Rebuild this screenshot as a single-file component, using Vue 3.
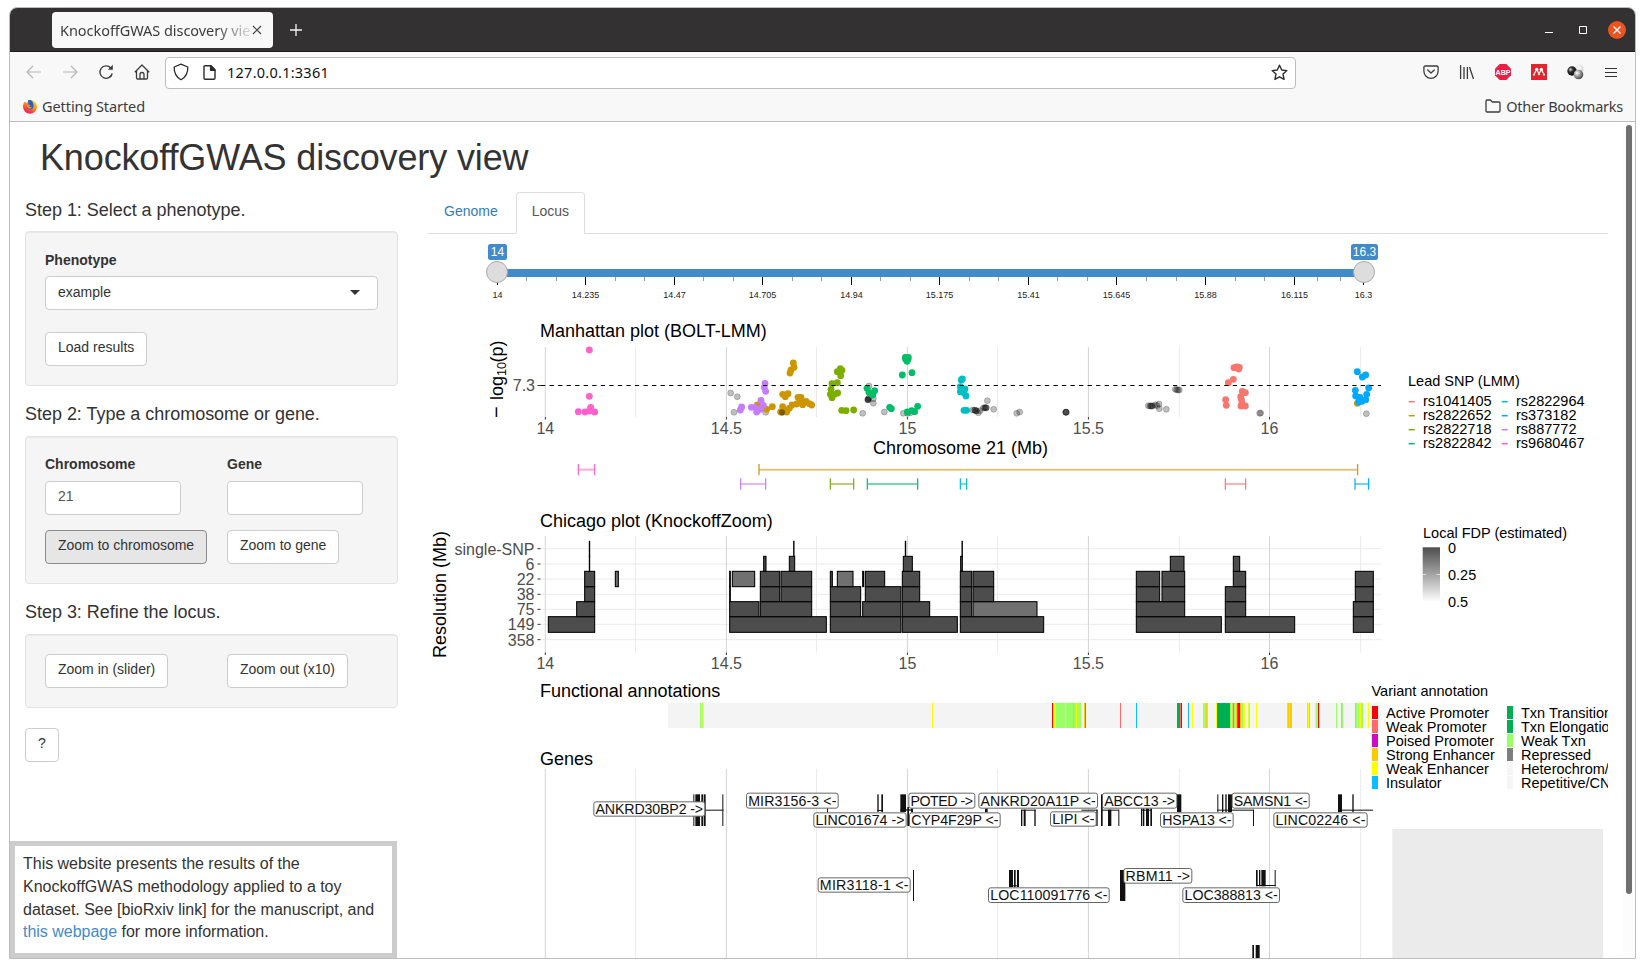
<script setup>
const sliderMajor = [
  [497.5, '14'], [585.5, '14.235'], [674.5, '14.47'], [762.5, '14.705'], [851.5, '14.94'], [939.5, '15.175'],
  [1028.5, '15.41'], [1116.5, '15.645'], [1205.5, '15.88'], [1294.5, '16.115'], [1363.5, '16.3'],
]
const sliderMinor = [
  526.5, 556.5, 615.5, 644.5, 703.5, 733.5, 792.5, 821.5, 880.5, 910.5, 969.5, 998.5, 1057.5, 1087.5,
  1146.5, 1176.5, 1235.5, 1264.5, 1317.5, 1340.5,
]

const majors = [[545.3, '14'], [726.4, '14.5'], [907.4, '15'], [1088.4, '15.5'], [1269.5, '16']]
const minors = [635.5, 816.5, 997.6, 1179.4, 1360.6]

// Plot data is kept in thirds of a pixel; these place it on the canvas.
const px = (v) => 420 + v / 3
const gx = (v) => 520 + v / 3
const my = (v) => 180 + v / 3
const cy = (v) => 425 + v / 3
const gy = (v) => 675 + v / 3

const C = {
  red: '#F8766D', gold: '#CD9600', olive: '#7CAE00', green: '#00BE67',
  teal: '#00BFC4', blue: '#00A9FF', purple: '#C77CFF', pink: '#FF61CC',
}
const series = [
  { c: C.pink, p: [[508, 510], [508, 649], [512, 682], [475, 695], [495, 696], [508, 693], [524, 696]] },
  { c: C.gold, p: [[1120, 549], [1122, 562], [1113, 570], [1110, 579], [1088, 643], [1104, 641], [1096, 650], [1134, 652], [1143, 652], [1140, 663], [1158, 664], [1148, 674], [1168, 671], [1175, 675], [1130, 672], [1116, 675], [1108, 685], [1088, 680], [1100, 696], [1082, 696], [1092, 688], [1057, 680], [1040, 688], [1024, 671], [1012, 675], [2812, 670]] },
  { c: C.purple, p: [[1035, 610], [1033, 622], [1037, 634], [1023, 661], [1030, 676], [965, 681], [961, 690], [994, 682], [1005, 682], [1010, 696], [1022, 688]] },
  { c: C.olive, p: [[1261, 566], [1252, 575], [1266, 571], [1262, 587], [1236, 611], [1252, 608], [1233, 628], [1231, 643], [1236, 653], [1243, 643], [1253, 639], [1265, 691], [1278, 692], [1301, 690]] },
  { c: C.green, p: [[1456, 532], [1465, 532], [1457, 538], [1464, 538], [1461, 544], [1447, 585], [1476, 578], [1341, 625], [1347, 637], [1364, 632], [1358, 645], [1409, 682], [1414, 686], [1462, 696], [1475, 692], [1484, 695], [1493, 679]] },
  { c: C.teal, p: [[1627, 597], [1624, 600], [1621, 620], [1621, 635], [1635, 627], [1638, 648], [1632, 639], [1632, 691], [1640, 691]] },
  { c: C.red, p: [[2442, 563], [2450, 561], [2458, 562], [2456, 567], [2440, 598], [2425, 608], [2417, 659], [2419, 676], [2467, 634], [2476, 638], [2462, 650], [2464, 658], [2466, 669], [2463, 678], [2476, 678]] },
  { c: C.blue, p: [[2812, 575], [2837, 585], [2827, 591], [2806, 631], [2846, 624], [2840, 643], [2807, 648], [2820, 652], [2837, 659], [2826, 664], [2816, 666]] },
]
const greys = [
  [932, 639], [952, 650], [942, 697], [1037, 697], [1085, 697], [1088, 697], [1328, 700], [1347, 618], [1343, 660],
  [1344, 657], [1345, 659], [1347, 654], [1360, 670], [1360, 656], [1393, 696], [1450, 700], [1463, 700], [1472, 698], [1658, 690],
  [1664, 690], [1665, 691], [1668, 693], [1670, 692], [1675, 698], [1680, 692], [1690, 684], [1694, 683], [1696, 683], [1698, 684],
  [1699, 683], [1702, 662], [1721, 688],
  [1790, 700], [1799, 696], [1937, 697], [1938, 697], [1938, 696], [1939, 697], [2266, 628], [2270, 629], [2274, 630], [2278, 630],
  [2185, 677], [2190, 678], [2193, 678], [2195, 678], [2198, 678], [2206, 674], [2211, 677], [2217, 672], [2218, 686], [2239, 688],
  [2519, 700], [2522, 699], [2839, 701],
]
const intervals = [
  [475, 524, 134, C.pink], [1017, 2813, 134, C.gold], [962, 1037, 177, C.purple], [1231, 1301, 177, C.olive],
  [1342, 1493, 177, C.green], [1621, 1640, 177, C.teal], [2416, 2477, 177, C.red], [2805, 2846, 177, C.blue],
]

const resolutions = [[371, 'single-SNP'], [417, '6'], [462, '22'], [508, '38'], [553, '75'], [598, '149'], [644, '358']]
const D = '#4d4d4d'
const L = '#707070'
const rows = [
  { y: 575, h: 47, b: [[385, 524], [929, 1219], [1231, 1443], [1447, 1612], [1621, 1871], [2149, 2404], [2416, 2624], [2800, 2860]] },
  { y: 530, h: 45, b: [[470, 524], [929, 1017], [1021, 1175], [1231, 1322], [1328, 1443], [1447, 1529], [1621, 1655], [1659, 1851, L], [2149, 2294], [2416, 2477], [2800, 2860]] },
  { y: 485, h: 45, b: [[494, 524], [929, 931], [1021, 1079], [1083, 1175], [1231, 1322], [1336, 1443], [1447, 1499], [1621, 1655], [1659, 1721], [2149, 2219], [2226, 2294], [2416, 2477], [2806, 2860]] },
  { y: 439, h: 46, b: [[494, 524], [586, 595, L], [929, 931], [937, 1004, L], [1021, 1079], [1083, 1175], [1231, 1237], [1252, 1299, L], [1328, 1331], [1336, 1394], [1447, 1499], [1621, 1655], [1659, 1721], [2149, 2219], [2226, 2294], [2440, 2477], [2806, 2860]] },
  { y: 394, h: 45, b: [[508, 509], [1031, 1038], [1108, 1124], [1450, 1477], [1622, 1627], [2251, 2292], [2440, 2459]] },
  { y: 349, h: 45, b: [[508, 509], [1121, 1122], [1456, 1457], [1626, 1627]] },
]

const Y = '#ffff00', G = '#99ff66', K = '#00b050', O = '#facb00', R = '#ff0000', W = '#ff6969', B = '#0abeff'
const bands = [
  [540, 543, G], [543, 552, Y], [546, 548, G], [1236, 1239, Y],
  [1596, 1600, R], [1600, 1606, Y], [1606, 1636, G], [1636, 1638, '#fff'], [1638, 1683, G], [1659, 1662, O], [1668, 1671, Y],
  [1692, 1695, O], [1695, 1698, '#1fa6cf'], [1800, 1803, W], [1848, 1851, B], [1971, 1980, K], [1980, 1983, W], [1983, 1986, R],
  [2004, 2007, B], [2016, 2019, Y], [2049, 2058, G], [2058, 2061, O], [2061, 2064, G], [2088, 2091, Y], [2091, 2130, K],
  [2130, 2137, G], [2134, 2138, Y], [2138, 2142, W], [2142, 2148, G], [2148, 2151, O], [2151, 2154, K], [2154, 2160, R],
  [2160, 2163, O], [2163, 2170, G], [2170, 2175, Y], [2184, 2190, G], [2185, 2188, Y], [2208, 2211, Y], [2301, 2304, G],
  [2304, 2307, O], [2307, 2310, G], [2310, 2316, O], [2361, 2364, G], [2364, 2367, Y], [2367, 2370, O], [2385, 2388, Y],
  [2388, 2394, G], [2394, 2397, R], [2397, 2400, G], [2448, 2451, G], [2463, 2466, O], [2466, 2469, G], [2505, 2508, O],
  [2508, 2529, G], [2511, 2514, Y], [2517, 2523, Y], [2544, 2547, Y],
]

// x0, x1, y0, y1
const exons = [
  [520, 523, 358, 453], [526, 540, 358, 453], [544, 549, 358, 453], [551, 557, 358, 453], [607, 610, 358, 453],
  [556, 610, 404, 407], [921, 924, 400, 412],
  [1072, 1076, 358, 411], [1084, 1089, 358, 411], [1072, 1088, 405, 408],
  [1141, 1158, 358, 411], [1141, 1178, 403, 407], [1162, 1167, 396, 453], [1173, 1179, 400, 412], [1395, 1403, 400, 412],
  [1503, 1507, 404, 453], [1511, 1517, 404, 453], [1543, 1547, 404, 453], [1504, 1547, 404, 407],
  [1684, 1732, 404, 407], [1729, 1733, 404, 453], [1743, 1748, 358, 453], [1743, 1797, 404, 407], [1764, 1774, 404, 453], [1795, 1798, 404, 453],
  [1863, 1867, 400, 453], [1869, 1873, 400, 453], [1878, 1887, 400, 453], [1891, 1896, 400, 453], [1864, 1895, 404, 407],
  [1971, 1984, 358, 411],
  [2092, 2095, 358, 411], [2106, 2110, 358, 411], [2116, 2120, 358, 411], [2124, 2136, 358, 411], [2092, 2202, 404, 407], [2199, 2202, 404, 453],
  [2454, 2466, 358, 411], [2497, 2501, 358, 411], [2454, 2559, 404, 407],
  [1179, 1182, 585, 678], [1467, 1479, 585, 636], [1482, 1487, 585, 636], [1491, 1497, 585, 636], [1467, 1497, 631, 634],
  [1800, 1816, 585, 678], [2208, 2213, 585, 634], [2217, 2221, 585, 634], [2224, 2237, 585, 634], [2264, 2267, 585, 634], [2208, 2267, 630, 633],
  [2197, 2202, 810, 852], [2207, 2219, 810, 852],
]
const genes = [
  [220, 556, 379, 425, 'ANKRD30BP2 ->'], [678, 956, 353, 401, 'MIR3156-3 <-'], [880, 1160, 412, 458, 'LINC01674 ->'],
  [1165, 1366, 353, 401, 'POTED ->'], [1167, 1442, 412, 458, 'CYP4F29P <-'], [1375, 1734, 353, 401, 'ANKRD20A11P <-'],
  [1590, 1730, 409, 455, 'LIPI <-'], [1746, 1972, 353, 401, 'ABCC13 ->'], [1920, 2141, 412, 458, 'HSPA13 <-'],
  [2135, 2369, 353, 401, 'SAMSN1 <-'], [2260, 2543, 412, 458, 'LINC02246 <-'],
  [893, 1172, 607, 653, 'MIR3118-1 <-'], [1404, 1769, 637, 684, 'LOC110091776 <-'], [1810, 2017, 579, 626, 'RBM11 ->'],
  [1987, 2280, 637, 684, 'LOC388813 <-'],
]

const snpLegend = [
  [0, 0, 'rs1041405', C.red], [0, 1, 'rs2822652', C.gold], [0, 2, 'rs2822718', C.olive], [0, 3, 'rs2822842', C.green],
  [1, 0, 'rs2822964', C.teal], [1, 1, 'rs373182', C.blue], [1, 2, 'rs887772', C.purple], [1, 3, 'rs9680467', C.pink],
]
const variantLegend = [
  [0, 0, 'Active Promoter', R], [0, 1, 'Weak Promoter', W], [0, 2, 'Poised Promoter', '#cf0bc6'],
  [0, 3, 'Strong Enhancer', O], [0, 4, 'Weak Enhancer', Y], [0, 5, 'Insulator', B],
  [1, 0, 'Txn Transition', K], [1, 1, 'Txn Elongation', K], [1, 2, 'Weak Txn', G],
  [1, 3, 'Repressed', '#7f7f7f'], [1, 4, 'Heterochrom/lo', '#f5f5f5'], [1, 5, 'Repetitive/CNV', '#f5f5f5'],
]
</script>

<template>
  <div class="window">
    <header class="titlebar">
      <div class="tab">
        <span class="tab-title">KnockoffGWAS discovery view</span>
        <svg class="tab-close" width="10" height="10" viewBox="0 0 10 10"><path d="M1 1l8 8M9 1l-8 8" stroke="#444" stroke-width="1.2" /></svg>
      </div>
      <svg class="newtab" width="12" height="12" viewBox="0 0 12 12"><path d="M6 0v12M0 6h12" stroke="#f4f4f4" stroke-width="1.3" /></svg>
      <div class="controls">
        <svg width="8" height="18" viewBox="0 0 8 18"><path d="M0 11.5h8" stroke="#fff" /></svg>
        <svg width="8" height="8" viewBox="0 0 8 8"><path d="M.5.5h7v7h-7z" fill="none" stroke="#fff" /></svg>
        <svg width="18" height="18" viewBox="0 0 18 18"><circle cx="9" cy="9" r="9" fill="#e95420" /><path d="M5.500 5.500l7 7M12.500 5.500l-7 7" stroke="#fff" stroke-width="1.4" /></svg>
      </div>
    </header>

    <nav class="toolbar">
      <div class="nav-icons">
        <svg width="16" height="16" viewBox="0 0 16 16" fill="none" stroke="#b5b5b5" stroke-width="1.2"><path d="M15 8H1.500M7 2L1 8l6 6" /></svg>
        <svg width="16" height="16" viewBox="0 0 16 16" fill="none" stroke="#b5b5b5" stroke-width="1.2"><path d="M1 8h13.500M9 2l6 6-6 6" /></svg>
        <svg width="16" height="16" viewBox="0 0 16 16" fill="none" stroke="#3c3c3c" stroke-width="1.4"><path d="M12.800 4A6.200 6.200 0 1 0 14.200 9.500" /><path d="M14.800.8v5h-5z" fill="#3c3c3c" stroke="none" /></svg>
        <svg width="16" height="16" viewBox="0 0 16 16" fill="none" stroke="#3c3c3c" stroke-width="1.3" stroke-linejoin="round"><path d="M.8 8.300L8 1l7.200 7.300M2.500 7v6.800c0 .8.4 1.200 1.200 1.200h8.600c.8 0 1.200-.4 1.200-1.200V7" /><path d="M6 15v-4.500a2 2 0 0 1 4 0V15" /></svg>
      </div>
      <div class="urlbar">
        <svg class="shield" width="16" height="18" viewBox="0 0 16 18" fill="none" stroke="#2b2b2b" stroke-width="1.3" stroke-linejoin="round"><path d="M8 1.200L14.800 4c.2 5.500-1.600 10-6.800 12.800C2.800 14 1 9.500 1.200 4z" /></svg>
        <svg class="doc" width="13" height="15" viewBox="0 0 13 15" fill="none" stroke="#2b2b2b" stroke-width="1.4" stroke-linejoin="round"><path d="M1 2c0-.8.400-1.200 1.200-1.200H8l4 4V13c0 .8-.4 1.200-1.200 1.200H2.200C1.400 14.200 1 13.800 1 13z" /><path d="M7.600.8v4.400H12z" fill="#2b2b2b" /></svg>
        <span class="url">127.0.0.1:3361</span>
        <svg class="star" width="17" height="17" viewBox="0 0 17 17" fill="none" stroke="#2b2b2b" stroke-width="1.4" stroke-linejoin="round"><path d="M8.500 1.200l2.200 4.800 5.200.6-3.900 3.500 1.100 5.300-4.600-2.600-4.600 2.600L5 10.100 1.100 6.600 6.300 6z" /></svg>
      </div>
      <div class="ext">
        <svg width="16" height="14" viewBox="0 0 16 14" fill="none" stroke="#3c3c3c" stroke-width="1.3" stroke-linecap="round" stroke-linejoin="round"><path d="M2.200 1h11.600c.8 0 1.300.5 1.300 1.300V6.200a7.100 7.100 0 0 1-14.200 0V2.300C.9 1.500 1.400 1 2.200 1z" /><path d="M4.700 5L8 8l3.300-3" /></svg>
        <svg width="16" height="16" viewBox="0 0 16 16" stroke="#3c3c3c" stroke-width="1.3"><path d="M1.600 1v14M5 3v12M8.400 3v12M10.500 3l4 12" /></svg>
        <svg width="16" height="16" viewBox="0 0 16 16"><path d="M4.700 0h6.600L16 4.700v6.600L11.300 16H4.700L0 11.300V4.700z" fill="#ed1e45" /><text x="8" y="10.900" text-anchor="middle" class="abp" textLength="15" lengthAdjust="spacingAndGlyphs">ABP</text></svg>
        <svg width="16" height="16" viewBox="0 0 16 16"><path d="M0 0h16v16H0z" fill="#e3242f" /><g fill="#fff"><circle cx="5.700" cy="5.500" r="1.700" /><circle cx="10.300" cy="5.500" r="1.700" /><circle cx="3" cy="10.600" r="1.100" /><circle cx="8" cy="10.200" r="1.100" /><circle cx="13" cy="10.600" r="1.100" /></g><path d="M3.500 9.500L5 6.500M6.300 6.500L7.500 9M8.500 9L9.700 6.500M11 6.500L12.500 9.500" fill="none" stroke="#fff" stroke-width="1.200" /></svg>
        <svg width="17" height="16" viewBox="0 0 17 16">
          <defs>
            <radialGradient id="ballDark" cx=".35" cy=".35" r=".7"><stop offset="0" stop-color="#ddd" /><stop offset=".35" stop-color="#333" /><stop offset="1" stop-color="#050505" /></radialGradient>
            <radialGradient id="ballGrey" cx=".35" cy=".35" r=".7"><stop offset="0" stop-color="#fff" /><stop offset=".5" stop-color="#999" /><stop offset="1" stop-color="#444" /></radialGradient>
            <radialGradient id="ballLight" cx=".4" cy=".4" r=".7"><stop offset="0" stop-color="#fff" /><stop offset="1" stop-color="#cfcfcf" /></radialGradient>
          </defs>
          <circle cx="12.700" cy="4.500" r="3.800" fill="url(#ballLight)" /><circle cx="5" cy="7" r="4.700" fill="url(#ballDark)" /><circle cx="11.500" cy="10.500" r="4.800" fill="url(#ballGrey)" />
        </svg>
        <svg class="menu" width="12" height="11" viewBox="0 0 12 11" stroke="#333"><path d="M0 1.500h12M0 5.500h12M0 9.500h12" /></svg>
      </div>
    </nav>

    <div class="bookmarks">
      <div class="bm">
        <svg width="14" height="15" viewBox="0 0 14 15">
          <defs><linearGradient id="fox" x1=".8" y1="0" x2=".2" y2="1"><stop offset="0" stop-color="#ffe226" /><stop offset=".45" stop-color="#ff8a16" /><stop offset=".8" stop-color="#ff2f4b" /><stop offset="1" stop-color="#e31587" /></linearGradient></defs>
          <path d="M2 2.500L3.500 4 7 .8c3 .2 7 3 7 7a7 7 0 0 1-14 0C0 5.500.8 3.800 2 2.500z" fill="url(#fox)" />
          <path d="M5 1.500C8 0 10.500 3 10.500 6.500c0 3-2 4-3.700 4-2 0-3.300-1.500-3-3.300l2.500.2L7.500 6 5.400 5.400z" fill="#2060d8" />
          <path d="M3.300 6.800c1.700 0 2.700.3 3.700 1.200 1 .2 1.500 0 1.800-.3-.2 1.500-1.800 2.300-3.300 1.800z" fill="#ff9a1c" />
        </svg>
        <span class="bm-a">Getting Started</span>
      </div>
      <div class="bm">
        <svg width="16" height="14" viewBox="0 0 16 14" fill="none" stroke="#3c3c3c" stroke-width="1.3" stroke-linejoin="round"><path d="M1 2.200C1 1.400 1.400 1 2.200 1h3.200l2 2h6.400c.8 0 1.200.4 1.200 1.200v7.600c0 .8-.4 1.200-1.200 1.200H2.200C1.400 13 1 12.600 1 11.800z" /></svg>
        <span class="bm-b">Other Bookmarks</span>
      </div>
    </div>

    <main class="page">
      <h2>KnockoffGWAS discovery view</h2>
      <div class="row">
        <aside class="sidebar">
          <h4>Step 1: Select a phenotype.</h4>
          <section class="well">
            <label>Phenotype</label>
            <div class="field select"><span>example</span><i class="caret"></i></div>
            <button class="btn load">Load results</button>
          </section>
          <h4 class="raised">Step 2: Type a chromosome or gene.</h4>
          <section class="well cols">
            <div class="col">
              <label class="raised">Chromosome</label>
              <div class="field short"><span>21</span></div>
              <button class="btn active">Zoom to chromosome</button>
            </div>
            <div class="col">
              <label class="raised">Gene</label>
              <div class="field short"></div>
              <button class="btn">Zoom to gene</button>
            </div>
          </section>
          <h4 class="raised">Step 3: Refine the locus.</h4>
          <section class="well cols">
            <div class="col"><button class="btn">Zoom in (slider)</button></div>
            <div class="col"><button class="btn">Zoom out (x10)</button></div>
          </section>
          <button class="btn">?</button>
        </aside>

        <section class="content">
          <div class="tabs">
            <span class="navtab link">Genome</span>
            <span class="navtab current">Locus</span>
          </div>

          <svg class="plots" width="1180" height="724" viewBox="428 234 1180 724">
            <defs>
              <linearGradient id="fdp" x1="0" y1="0" x2="0" y2="1"><stop offset="0" stop-color="#4d4d4d" /><stop offset=".5" stop-color="#a3a3a3" /><stop offset="1" stop-color="#fbfbfb" /></linearGradient>
            </defs>

            <g class="slider">
              <rect x="497" y="269" width="867" height="8" fill="#428bca" />
              <path v-for="x in sliderMinor" :key="x" :d="`M${x} 277v4`" stroke="#999" />
              <g v-for="[x, t] in sliderMajor" :key="t">
                <path :d="`M${x} 277v8`" stroke="#000" />
                <text :x="x" y="298" class="tick">{{ t }}</text>
              </g>
              <circle cx="497" cy="272" r="10.500" fill="#ddd" stroke="#aaa" />
              <circle cx="1364" cy="272" r="10.500" fill="#ddd" stroke="#aaa" />
              <rect x="488" y="244" width="19" height="16" rx="2.500" fill="#428bca" />
              <rect x="1351" y="244" width="27" height="16" rx="2.500" fill="#428bca" />
              <text x="497.500" y="255.500" class="bubble">14</text>
              <text x="1364.500" y="255.500" class="bubble">16.3</text>
            </g>

            <g>
              <text x="540" y="337" class="title">Manhattan plot (BOLT-LMM)</text>
              <path v-for="x in minors" :key="x" :d="`M${x} 347V417`" stroke="#ebebeb" />
              <g v-for="[x, t] in majors" :key="t">
                <path :d="`M${x} 347V417`" stroke="#d4d4d4" />
                <path :d="`M${x} 417v2.500`" stroke="#333" />
                <text :x="x" y="433.500" class="axis mid">{{ t }}</text>
              </g>
              <text transform="translate(502.500 418) rotate(-90)" class="title minus">−</text>
              <text transform="translate(502.500 400) rotate(-90)" class="title">log</text>
              <text transform="translate(506 376) rotate(-90)" class="sub">10</text>
              <text transform="translate(502.500 362.500) rotate(-90)" class="title">(p)</text>
              <text x="535" y="391" class="axis end">7.3</text>
              <path d="M537.500 385.500h3.500" stroke="#333" />
              <circle v-for="(p, i) in greys" :key="i" :cx="px(p[0])" :cy="my(p[1])" r="3" fill="#000" fill-opacity=".25" stroke="#000" stroke-opacity=".25" stroke-width=".8" />
              <g v-for="s in series" :key="s.c" :fill="s.c">
                <circle v-for="(p, i) in s.p" :key="i" :cx="px(p[0])" :cy="my(p[1])" r="3.400" />
              </g>
              <circle :cx="px(1086)" :cy="my(697)" r="3" fill="#000" fill-opacity=".4" />
              <circle :cx="px(1344)" :cy="my(659)" r="3" fill="#000" fill-opacity=".3" />
              <path d="M541 385.500H1381" stroke="#000" stroke-width="1.100" stroke-dasharray="4.270 4.270" />
              <text x="873" y="454" class="title">Chromosome 21 (Mb)</text>
            </g>

            <g v-for="(v, i) in intervals" :key="i" :stroke="v[3]" fill="none">
              <path :d="`M${px(v[0])} ${cy(v[2])}H${px(v[1])}`" stroke-width="2" stroke-opacity=".55" />
              <path :d="`M${px(v[0])} ${cy(v[2]) - 5.700}v11.400M${px(v[1])} ${cy(v[2]) - 5.700}v11.400`" stroke-width="1.200" />
            </g>

            <g>
              <text x="540" y="527" class="title">Chicago plot (KnockoffZoom)</text>
              <path v-for="x in minors" :key="x" :d="`M${x} 536V652.500`" stroke="#ebebeb" />
              <g v-for="[y, t] in resolutions" :key="t">
                <path :d="`M541 ${cy(y)}H1381`" stroke="#ebebeb" />
                <path :d="`M537.500 ${cy(y)}h3`" stroke="#333" />
                <text x="534.500" :y="cy(y) + 6" class="axis end">{{ t }}</text>
              </g>
              <g v-for="[x, t] in majors" :key="t">
                <path :d="`M${x} 536V652.500`" stroke="#d4d4d4" />
                <path :d="`M${x} 652.500v2.500`" stroke="#333" />
                <text :x="x" y="669" class="axis mid">{{ t }}</text>
              </g>
              <rect :x="px(931)" :y="cy(486)" :width="86 / 3" :height="44 / 3" fill="#fff" />
              <g v-for="r in rows" :key="r.y" stroke="#000" stroke-width="1.050">
                <rect v-for="b in r.b" :key="b[0]" :x="px(b[0])" :y="cy(r.y)" :width="(b[1] - b[0]) / 3" :height="r.h / 3" :fill="b[2] || D" />
              </g>
              <text transform="translate(446 658) rotate(-90)" class="title">Resolution (Mb)</text>
            </g>

            <g>
              <text x="540" y="697" class="title func">Functional annotations</text>
              <rect x="668" y="703" width="713" height="25" fill="#f4f4f4" />
              <rect v-for="(b, i) in bands" :key="i" :x="gx(b[0])" y="703" :width="(b[1] - b[0]) / 3" height="25" :fill="b[2]" />
            </g>

            <g>
              <text x="540" y="765" class="title">Genes</text>
              <path v-for="x in minors" :key="x" :d="`M${x} 769V958`" stroke="#ebebeb" />
              <path v-for="[x, t] in majors" :key="t" :d="`M${x} 769V958`" stroke="#d4d4d4" />
              <rect v-for="(e, i) in exons" :key="i" :x="gx(e[0])" :y="gy(e[2])" :width="(e[1] - e[0]) / 3" :height="(e[3] - e[2]) / 3" fill="#111" />
              <g v-for="g in genes" :key="g[4]">
                <rect :x="gx(g[0]) + .5" :y="gy(g[2]) + .5" :width="(g[1] - g[0]) / 3 - 1" :height="(g[3] - g[2]) / 3 - 1" rx="2.200" fill="#fff" stroke="#555" stroke-width=".9" />
                <text :x="gx(g[0]) + 2.200" :y="gy(g[3]) - 3" class="gene" :textLength="(g[1] - g[0]) / 3 - 4.400">{{ g[4] }}</text>
              </g>
            </g>

            <g>
              <text x="1408" y="386" class="legend">Lead SNP (LMM)</text>
              <g v-for="[c, r, t, col] in snpLegend" :key="t">
                <path :d="`M${1408.700 + c * 93} ${401.700 + r * 14}h6`" :stroke="col" stroke-width="1.500" />
                <text :x="1423 + c * 93" :y="406.400 + r * 14" class="legend">{{ t }}</text>
              </g>
              <text x="1423" y="538.300" class="legend">Local FDP (estimated)</text>
              <rect x="1422.700" y="547.300" width="17.300" height="53.500" fill="url(#fdp)" />
              <path d="M1422.700 574.500h3.500M1436.500 574.500h3.500" stroke="#ddd" />
              <text x="1448" y="553" class="legend">0</text>
              <text x="1448" y="580" class="legend">0.25</text>
              <text x="1448" y="606.500" class="legend">0.5</text>
              <text x="1371.500" y="696.300" class="legend">Variant annotation</text>
              <g v-for="[c, r, t, col] in variantLegend" :key="t">
                <rect :x="1372 + c * 135" :y="706 + r * 14" width="6" height="13" :fill="col" />
                <text :x="1386 + c * 135" :y="717.800 + r * 14" class="legend">{{ t }}</text>
              </g>
              <rect x="1392.300" y="829" width="210.700" height="129" fill="#ebebeb" />
            </g>
          </svg>
        </section>
      </div>

      <div class="scrollbar"><div class="thumb"></div></div>
      <div class="note">
        This website presents the results of the KnockoffGWAS methodology applied to a toy dataset. See [bioRxiv link] for the manuscript, and <a>this webpage</a> for more information.
      </div>
    </main>
  </div>
</template>

<style>
body { margin: 0; background: #fff; }
</style>

<style scoped>
* { box-sizing: border-box; }
.window {
  width: 1627px; height: 952px; margin: 7px 0 0 9px; border: 1px solid #bcbcbc; border-radius: 8px 8px 0 0;
  overflow: hidden; display: flex; flex-direction: column;
  font-family: "Liberation Sans", Arial, sans-serif; color: #333;
}
.titlebar { flex: none; height: 44px; background: #333132; border-bottom: 1px solid #1c1c1c; display: flex; align-items: center; padding: 0 9px 0 42px; }
.tab { width: 221px; height: 36px; border-radius: 4px; background: #f8f8f8; display: flex; align-items: center; padding: 0 11px 0 8px; justify-content: space-between; }
.tab-title, .url, .bm span { font-family: "Noto Sans", "Open Sans", sans-serif; }
.tab-title {
  width: 190px; overflow: hidden; white-space: nowrap; font-size: 14.500px; letter-spacing: -.05px; color: #3c3c3c;
  -webkit-mask-image: linear-gradient(90deg, #000 82%, transparent 103%); mask-image: linear-gradient(90deg, #000 82%, transparent 103%);
}
.newtab { margin-left: 17px; }
.controls { margin-left: auto; display: flex; align-items: center; gap: 26px; }
.controls svg:last-child { margin-left: -5px; }
.toolbar { flex: none; height: 41px; background: #f8f8f8; display: flex; align-items: center; padding: 0 18px 1px 16px; }
.nav-icons { display: flex; gap: 20px; }
.urlbar { position: relative; top: .5px; margin-left: 15px; width: 1131px; height: 32px; border: 1px solid #bdbdbd; border-radius: 4px; background: #fff; display: flex; align-items: center; padding: 0 7px 1px; }
.doc { margin-left: 14px; }
.url { margin-left: 11px; font-size: 14.500px; letter-spacing: .25px; color: #111; }
.star { margin-left: auto; }
.ext { margin-left: auto; display: flex; align-items: center; gap: 20px; }
.menu { margin-left: 1px; }
.abp { font: bold 7.500px "Liberation Sans", sans-serif; fill: #fff; }
.bookmarks { flex: none; height: 29px; background: #f8f8f8; border-bottom: 1px solid #bcbcbc; display: flex; justify-content: space-between; padding: 0 12px 2px 13px; }
.bm { display: flex; align-items: center; gap: 5px; font-size: 14.500px; color: #3c3c3c; }
.bm-a { letter-spacing: -.08px; }
.bm-b { letter-spacing: -.25px; }
.page { position: relative; flex: 1; overflow: hidden; background: #fff; }
h2 { margin: 16px 0 0 30px; font-size: 36px; line-height: 40px; font-weight: 400; letter-spacing: -.14px; }
.row { display: flex; padding-left: 15px; }
.sidebar { width: 373px; flex: none; padding-top: 23px; }
h4 { margin: 0 0 10px; font-size: 18px; font-weight: 400; line-height: 18px; padding-bottom: 2px; letter-spacing: -.03px; }
h4.raised { line-height: 16px; padding-bottom: 4px; }
.well { background: #f5f5f5; border: 1px solid #e3e3e3; border-radius: 4px; padding: 19px; margin-bottom: 20px; box-shadow: inset 0 1px 1px rgba(0, 0, 0, .05); }
.cols { display: flex; }
.col { width: 182px; flex: none; }
.col + .col { width: 136px; }
label { display: block; font-size: 14px; font-weight: 700; line-height: 18px; padding-bottom: 2px; margin-bottom: 5px; }
label.raised { line-height: 16px; padding-bottom: 4px; }
.field { height: 34px; border: 1px solid #ccc; border-radius: 4px; background: #fff; padding: 0 12px 3px; font-size: 14px; display: flex; align-items: center; justify-content: space-between; }
.field.short { width: 136px; margin-bottom: 15px; padding-bottom: 4px; color: #555; }
.caret { margin: 2px 5px 0 0; border: 5px solid transparent; border-top-color: #333; border-bottom: 0; }
.btn {
  display: block; height: 34px; padding: 0 12px 4px; border: 1px solid #ccc; border-radius: 4px; background: #fff;
  font: 14px "Liberation Sans", Arial, sans-serif; color: #333; white-space: nowrap;
}
.btn.active { background: #e6e6e6; border-color: #8c8c8c; }
.load { margin-top: 22px; }
.content { width: 1180px; flex: none; margin-left: 30px; padding-top: 14px; }
.tabs { display: flex; height: 42px; border-bottom: 1px solid #ddd; }
.navtab { height: 42px; padding: 0 15px; border: 1px solid transparent; font-size: 14px; line-height: 36px; margin-right: 2px; }
.link { color: #337ab7; }
.current { color: #555; background: #fff; border-color: #ddd #ddd #fff; border-radius: 4px 4px 0 0; }
.plots { display: block; font-family: "Liberation Sans", Arial, sans-serif; }
.title { font-size: 18px; fill: #000; }
.func { letter-spacing: -.04px; }
.minus { font-size: 20px; }
.sub { font-size: 12.600px; fill: #000; }
.axis { font-size: 16px; fill: #4d4d4d; }
.mid { text-anchor: middle; }
.end { text-anchor: end; }
.legend { font-size: 14.500px; fill: #000; }
.gene { font-size: 14.200px; fill: #111; }
.tick { font-size: 9px; fill: #222; text-anchor: middle; }
.bubble { font-size: 12px; fill: #fff; text-anchor: middle; }
.scrollbar { position: absolute; top: 0; right: 0; bottom: 0; width: 12px; padding: 3px 3px 0; background: #fcfcfc; }
.thumb { height: 769px; border-radius: 3px; background: #6f6f6f; }
.note { position: absolute; left: 0; bottom: 0; width: 387px; height: 117px; border: 5px solid #ccc; background: #fff; padding: 7px 8px 0; font-size: 16px; line-height: 22.800px; letter-spacing: -.02px; }
.note a { color: #428bca; }
</style>
